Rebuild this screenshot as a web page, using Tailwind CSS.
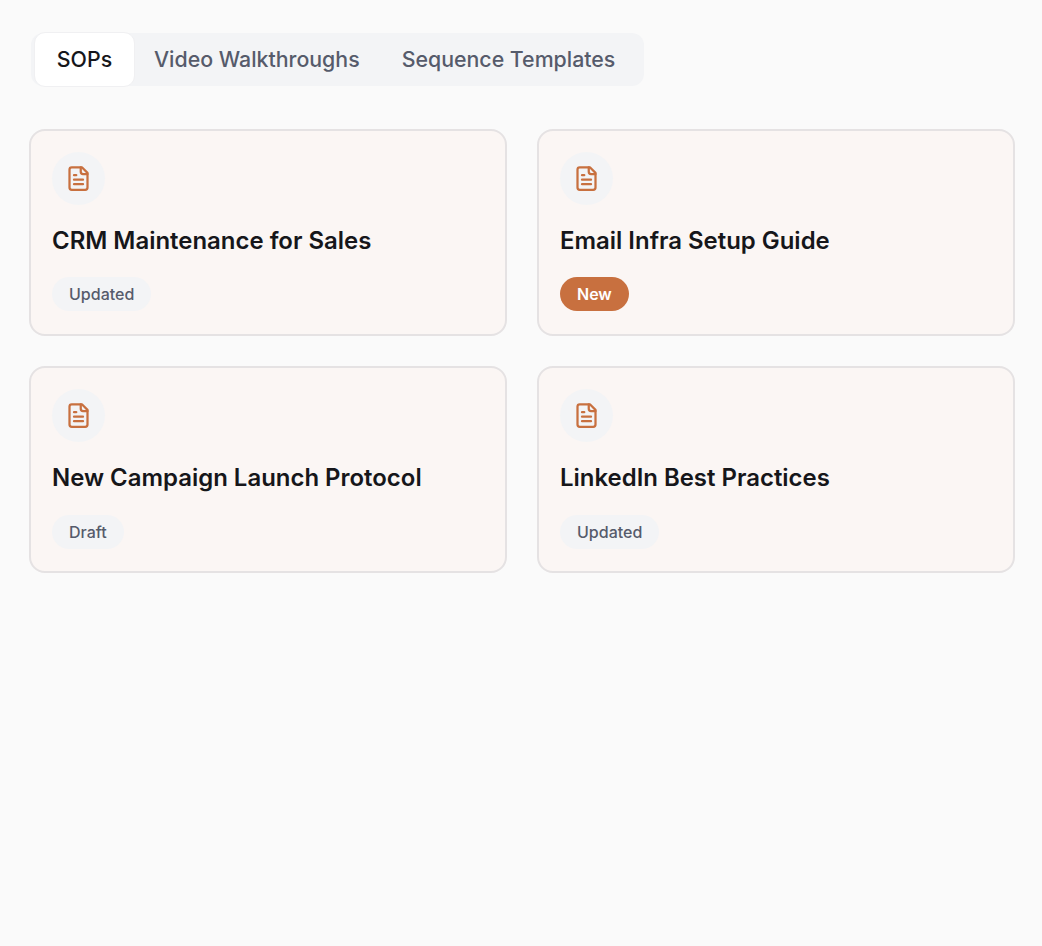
<!DOCTYPE html>
<html><head><script src="https://cdn.jsdelivr.net/npm/@tailwindcss/browser@4"></script></head>
<body class="bg-[#fafafa] min-h-screen font-['Inter',sans-serif] antialiased">
<div class="pl-[29px] pr-[27px] pt-[33px] flex flex-col gap-[43px]">
<div class="self-start ml-[2px] flex items-center h-[53px] pl-[3px] pr-[7px] rounded-xl bg-[#f3f4f6] text-[21.33px] font-medium text-[#565b6b]">
<div class="h-[55px] w-[101px] flex items-center justify-center bg-white rounded-[11px] border border-[#f0f0f2] text-[#16161a]">SOPs</div>
<div class="h-full pl-[19px] pr-[20px] flex items-center">Video Walkthroughs</div>
<div class="h-full px-[22px] flex items-center">Sequence Templates</div>
</div>
<div class="grid grid-cols-2 gap-x-[30px] gap-y-[30px]">
<div class="h-[207px] rounded-2xl border-2 border-[#e5e2e3] bg-[#fbf6f4] p-[21px] flex flex-col items-start">
<div class="w-[53px] h-[53px] rounded-full bg-[#f3f4f6] flex items-center justify-center text-[#c8703f]"><svg class="w-[27px] h-[27px]" viewBox="0 0 24 24" fill="none" stroke="currentColor" stroke-width="2" stroke-linecap="round" stroke-linejoin="round"><path d="M15 2H6a2 2 0 0 0-2 2v16a2 2 0 0 0 2 2h12a2 2 0 0 0 2-2V7Z"/><path d="M14 2v4a2 2 0 0 0 2 2h4"/><path d="M10 9H8"/><path d="M16 13H8"/><path d="M16 17H8"/></svg></div>
<div class="mt-[20px] text-[23.94px] leading-[32px] font-semibold text-[#16161a]">CRM Maintenance for Sales</div>
<div class="mt-[20px] h-[34px] px-[17px] rounded-full bg-[#f3f4f6] flex items-center text-[16px] font-[550] text-[#565b6b]">Updated</div>
</div>
<div class="h-[207px] rounded-2xl border-2 border-[#e5e2e3] bg-[#fbf6f4] p-[21px] flex flex-col items-start">
<div class="w-[53px] h-[53px] rounded-full bg-[#f3f4f6] flex items-center justify-center text-[#c8703f]"><svg class="w-[27px] h-[27px]" viewBox="0 0 24 24" fill="none" stroke="currentColor" stroke-width="2" stroke-linecap="round" stroke-linejoin="round"><path d="M15 2H6a2 2 0 0 0-2 2v16a2 2 0 0 0 2 2h12a2 2 0 0 0 2-2V7Z"/><path d="M14 2v4a2 2 0 0 0 2 2h4"/><path d="M10 9H8"/><path d="M16 13H8"/><path d="M16 17H8"/></svg></div>
<div class="mt-[20px] text-[23.94px] leading-[32px] font-semibold text-[#16161a]">Email Infra Setup Guide</div>
<div class="mt-[20px] h-[34px] px-[17px] rounded-full bg-[#c8703f] flex items-center text-[16px] font-semibold text-white">New</div>
</div>
<div class="h-[207px] rounded-2xl border-2 border-[#e5e2e3] bg-[#fbf6f4] p-[21px] flex flex-col items-start">
<div class="w-[53px] h-[53px] rounded-full bg-[#f3f4f6] flex items-center justify-center text-[#c8703f]"><svg class="w-[27px] h-[27px]" viewBox="0 0 24 24" fill="none" stroke="currentColor" stroke-width="2" stroke-linecap="round" stroke-linejoin="round"><path d="M15 2H6a2 2 0 0 0-2 2v16a2 2 0 0 0 2 2h12a2 2 0 0 0 2-2V7Z"/><path d="M14 2v4a2 2 0 0 0 2 2h4"/><path d="M10 9H8"/><path d="M16 13H8"/><path d="M16 17H8"/></svg></div>
<div class="mt-[20px] text-[23.94px] leading-[32px] font-semibold text-[#16161a]">New Campaign Launch Protocol</div>
<div class="mt-[21px] h-[34px] px-[17px] rounded-full bg-[#f3f4f6] flex items-center text-[16px] font-[550] text-[#565b6b]">Draft</div>
</div>
<div class="h-[207px] rounded-2xl border-2 border-[#e5e2e3] bg-[#fbf6f4] p-[21px] flex flex-col items-start">
<div class="w-[53px] h-[53px] rounded-full bg-[#f3f4f6] flex items-center justify-center text-[#c8703f]"><svg class="w-[27px] h-[27px]" viewBox="0 0 24 24" fill="none" stroke="currentColor" stroke-width="2" stroke-linecap="round" stroke-linejoin="round"><path d="M15 2H6a2 2 0 0 0-2 2v16a2 2 0 0 0 2 2h12a2 2 0 0 0 2-2V7Z"/><path d="M14 2v4a2 2 0 0 0 2 2h4"/><path d="M10 9H8"/><path d="M16 13H8"/><path d="M16 17H8"/></svg></div>
<div class="mt-[20px] text-[23.94px] leading-[32px] font-semibold text-[#16161a]">LinkedIn Best Practices</div>
<div class="mt-[21px] h-[34px] px-[17px] rounded-full bg-[#f3f4f6] flex items-center text-[16px] font-[550] text-[#565b6b]">Updated</div>
</div>
</div>
</div>
</body></html>
